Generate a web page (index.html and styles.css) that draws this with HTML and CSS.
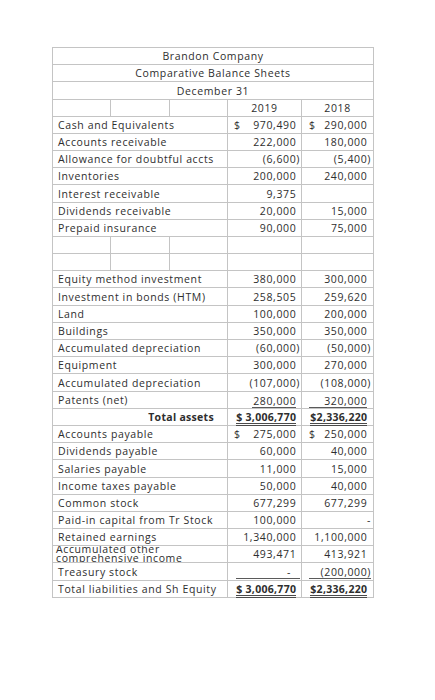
FILE: index.html
```html
<!DOCTYPE html>
<html>
<head>
<meta charset="utf-8">
<link rel="stylesheet" href="styles.css">
</head>
<body>
<div class="sheet">
<table class="bs">
<colgroup><col class="c1"><col class="c2"><col class="c3"><col class="c4"><col class="c5"></colgroup>
<tr><td colspan="5" class="title">Brandon Company</td></tr>
<tr><td colspan="5" class="title">Comparative Balance Sheets</td></tr>
<tr class="t"><td colspan="5" class="title">December 31</td></tr>
<tr><td></td><td></td><td></td><td class="yr">2019</td><td class="yr">2018</td></tr>
<tr><td colspan="3" class="lbl">Cash and Equivalents</td><td class="v a"><div class="cell"><span>$</span><span>970,490<i>)</i></span></div></td><td class="v b"><div class="cell"><span>$</span><span>290,000<i>)</i></span></div></td></tr>
<tr><td colspan="3" class="lbl">Accounts receivable</td><td class="v a"><div class="cell r">222,000<i>)</i></div></td><td class="v b"><div class="cell r">180,000<i>)</i></div></td></tr>
<tr><td colspan="3" class="lbl">Allowance for doubtful accts</td><td class="v a"><div class="cell r">(6,600)</div></td><td class="v b"><div class="cell r">(5,400)</div></td></tr>
<tr><td colspan="3" class="lbl">Inventories</td><td class="v a"><div class="cell r">200,000<i>)</i></div></td><td class="v b"><div class="cell r">240,000<i>)</i></div></td></tr>
<tr class="t"><td colspan="3" class="lbl">Interest receivable</td><td class="v a"><div class="cell r">9,375<i>)</i></div></td><td class="v b"></td></tr>
<tr><td colspan="3" class="lbl">Dividends receivable</td><td class="v a"><div class="cell r">20,000<i>)</i></div></td><td class="v b"><div class="cell r">15,000<i>)</i></div></td></tr>
<tr><td colspan="3" class="lbl">Prepaid insurance</td><td class="v a"><div class="cell r">90,000<i>)</i></div></td><td class="v b"><div class="cell r">75,000<i>)</i></div></td></tr>
<tr><td></td><td></td><td></td><td></td><td></td></tr>
<tr><td></td><td></td><td></td><td></td><td></td></tr>
<tr><td colspan="3" class="lbl">Equity method investment</td><td class="v a"><div class="cell r">380,000<i>)</i></div></td><td class="v b"><div class="cell r">300,000<i>)</i></div></td></tr>
<tr class="t"><td colspan="3" class="lbl">Investment in bonds (HTM)</td><td class="v a"><div class="cell r">258,505<i>)</i></div></td><td class="v b"><div class="cell r">259,620<i>)</i></div></td></tr>
<tr><td colspan="3" class="lbl">Land</td><td class="v a"><div class="cell r">100,000<i>)</i></div></td><td class="v b"><div class="cell r">200,000<i>)</i></div></td></tr>
<tr><td colspan="3" class="lbl">Buildings</td><td class="v a"><div class="cell r">350,000<i>)</i></div></td><td class="v b"><div class="cell r">350,000<i>)</i></div></td></tr>
<tr><td colspan="3" class="lbl">Accumulated depreciation</td><td class="v a"><div class="cell r">(60,000)</div></td><td class="v b"><div class="cell r">(50,000)</div></td></tr>
<tr><td colspan="3" class="lbl">Equipment</td><td class="v a"><div class="cell r">300,000<i>)</i></div></td><td class="v b"><div class="cell r">270,000<i>)</i></div></td></tr>
<tr class="t"><td colspan="3" class="lbl">Accumulated depreciation</td><td class="v a"><div class="cell r">(107,000)</div></td><td class="v b"><div class="cell r">(108,000)</div></td></tr>
<tr><td colspan="3" class="lbl">Patents (net)</td><td class="v a"><div class="cell r"><span class="ul ul-pa">280,000</span><i>)</i></div></td><td class="v b"><div class="cell r"><span class="ul ul-pb">320,000</span><i>)</i></div></td></tr>
<tr><td colspan="3" class="lbl total">Total assets</td><td class="v a"><div class="cell r"><b class="dbl">$&nbsp;3,006,770</b><i>)</i></div></td><td class="v b"><div class="cell r"><b class="dbl">$2,336,220</b><i>)</i></div></td></tr>
<tr><td colspan="3" class="lbl">Accounts payable</td><td class="v a"><div class="cell"><span>$</span><span>275,000<i>)</i></span></div></td><td class="v b"><div class="cell"><span>$</span><span>250,000<i>)</i></span></div></td></tr>
<tr><td colspan="3" class="lbl">Dividends payable</td><td class="v a"><div class="cell r">60,000<i>)</i></div></td><td class="v b"><div class="cell r">40,000<i>)</i></div></td></tr>
<tr class="t"><td colspan="3" class="lbl">Salaries payable</td><td class="v a"><div class="cell r">11,000<i>)</i></div></td><td class="v b"><div class="cell r">15,000<i>)</i></div></td></tr>
<tr><td colspan="3" class="lbl">Income taxes payable</td><td class="v a"><div class="cell r">50,000<i>)</i></div></td><td class="v b"><div class="cell r">40,000<i>)</i></div></td></tr>
<tr><td colspan="3" class="lbl">Common stock</td><td class="v a"><div class="cell r">677,299<i>)</i></div></td><td class="v b"><div class="cell r">677,299<i>)</i></div></td></tr>
<tr><td colspan="3" class="lbl">Paid-in capital from Tr Stock</td><td class="v a"><div class="cell r">100,000<i>)</i></div></td><td class="v b"><div class="cell r dash">-</div></td></tr>
<tr><td colspan="3" class="lbl">Retained earnings</td><td class="v a"><div class="cell r">1,340,000<i>)</i></div></td><td class="v b"><div class="cell r">1,100,000<i>)</i></div></td></tr>
<tr><td colspan="3" class="lbl aoci"><div class="wrap">Accumulated other<br>comprehensive income</div></td><td class="v a"><div class="cell r">493,471<i>)</i></div></td><td class="v b"><div class="cell r">413,921<i>)</i></div></td></tr>
<tr class="t"><td colspan="3" class="lbl">Treasury stock</td><td class="v a"><div class="cell r"><span class="ul ul-ta"><span class="dash">-</span></span></div></td><td class="v b"><div class="cell r"><span class="ul ul-tb">(200,000)</span></div></td></tr>
<tr><td colspan="3" class="lbl">Total liabilities and Sh Equity</td><td class="v a"><div class="cell r"><b class="dbl">$&nbsp;3,006,770</b><i>)</i></div></td><td class="v b"><div class="cell r"><b class="dbl">$2,336,220</b><i>)</i></div></td></tr>
</table>
</div>
</body>
</html>
```

FILE: styles.css
```css
html, body {
  margin: 0;
  background: #ffffff;
}
body {
  font-family: "Open Sans", "DejaVu Sans", sans-serif;
  font-size: 10.5px;
  color: #2e2e2e;
}
.sheet {
  padding: 47px 0 0 52px;
}
.bs {
  border-collapse: separate;
  border-spacing: 0;
  table-layout: fixed;
  width: 322px;
  border-top: 1px solid #c4c4c4;
  border-left: 1px solid #c4c4c4;
}
.c1 { width: 58px; }
.c2 { width: 59px; }
.c3 { width: 58px; }
.c4 { width: 74px; }
.c5 { width: 72px; }
.bs td {
  box-sizing: border-box;
  border-right: 1px solid #c4c4c4;
  border-bottom: 1px solid #c4c4c4;
  height: 17px;
  padding: 0;
  line-height: 16px;
  white-space: nowrap;
  letter-spacing: 0.62px;
  vertical-align: middle;
}
.bs tr.t td {
  height: 18px;
}
.title {
  text-align: center;
}
.yr {
  text-align: center;
}
.lbl {
  padding-left: 5px !important;
}
.lbl.total {
  text-align: right;
  font-weight: 700;
  padding-right: 13px !important;
  letter-spacing: 0.3px;
}
.cell {
  display: flex;
  justify-content: space-between;
  align-items: center;
  height: 16px;
}
.cell.r {
  justify-content: flex-end;
}
.v.a .cell { padding: 0 1px 0 6px; }
.v.b .cell { padding: 0 2px 0 7px; }
.cell i {
  font-style: normal;
  visibility: hidden;
}
.dash {
  padding-right: 9px;
}
.ul {
  display: inline-block;
  line-height: 12px;
  border-bottom: 1px solid #5a5a5a;
  text-align: right;
  margin-top: 2px;
}
.ul-pa { width: 44px; }
.ul-pb { width: 58px; }
.ul-ta { width: 64px; }
.ul-tb { width: 62px; }
.dbl {
  display: inline-block;
  line-height: 12px;
  font-weight: 700;
  letter-spacing: 0.3px;
  border-bottom: 3px double #4a4a4a;
  margin-top: 2px;
}
.aoci {
  padding-left: 3px !important;
  vertical-align: top !important;
  overflow: hidden;
}
.aoci .wrap {
  height: 16px;
  line-height: 9px;
  margin-top: -1px;
}
```
